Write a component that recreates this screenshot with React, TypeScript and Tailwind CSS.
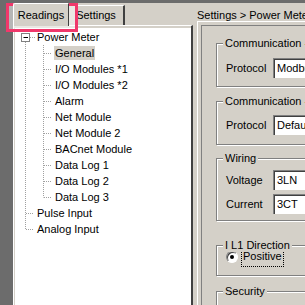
import React from "react";

// Tree rows: [label, level]
const TREE: Array<[string, number]> = [
  ["Power Meter", 0],
  ["General", 1],
  ["I/O Modules *1", 1],
  ["I/O Modules *2", 1],
  ["Alarm", 1],
  ["Net Module", 1],
  ["Net Module 2", 1],
  ["BACnet Module", 1],
  ["Data Log 1", 1],
  ["Data Log 2", 1],
  ["Data Log 3", 1],
  ["Pulse Input", 0],
  ["Analog Input", 0],
];

const ROW = 16;

function TreeLines() {
  // connectors drawn in row-local coordinates (origin = top of first row)
  const mid = (i: number) => i * ROW + 8.5;
  const dash = { stroke: "#a0a0a0", strokeWidth: 1, strokeDasharray: "1 1" };
  return (
    <svg className="absolute left-0 top-0" width="176" height="220">
      {/* root level */}
      <line x1={10.5} y1={13} x2={10.5} y2={mid(12)} {...dash} />
      <line x1={15} y1={mid(0)} x2={20} y2={mid(0)} {...dash} />
      <line x1={11} y1={mid(11)} x2={19} y2={mid(11)} {...dash} />
      <line x1={11} y1={mid(12)} x2={19} y2={mid(12)} {...dash} />
      {/* children */}
      <line x1={28.5} y1={16} x2={28.5} y2={mid(10)} {...dash} />
      {TREE.map(([, lvl], i) =>
        lvl === 1 ? <line key={i} x1={29} y1={mid(i)} x2={37} y2={mid(i)} {...dash} /> : null
      )}
      {/* expand box */}
      <rect x={6.5} y={4.5} width={8} height={8} fill="white" stroke="#808080" />
      <line x1={8.5} y1={8.5} x2={13} y2={8.5} stroke="black" />
    </svg>
  );
}

function GroupBox({ title, className, children }: { title: string; className?: string; children?: React.ReactNode }) {
  return (
    <div
      className={
        "relative w-[200px] shrink-0 border border-[#808080] shadow-[inset_1px_1px_0_#ffffff,1px_1px_0_#ffffff] " +
        (className ?? "")
      }
    >
      <span className="absolute -top-[8px] left-[6px] bg-[#d4d0c8] px-[2px] leading-[14px] whitespace-nowrap">{title}</span>
      {children}
    </div>
  );
}

function Field({ label, value }: { label: string; value: string }) {
  return (
    <div className="flex items-center h-[20px]">
      <span className="w-[47px] shrink-0">{label}</span>
      <div className="h-[20px] w-[90px] shrink-0 bg-white border-t border-l border-[#808080] shadow-[inset_1px_1px_0_#404040] pl-[3px] flex items-center">
        {value}
      </div>
    </div>
  );
}

export default function App() {
  return (
    <div
      className="relative w-[305px] h-[305px] overflow-hidden bg-[#d4d0c8] flex text-[11px] text-black"
      style={{ fontFamily: '"Liberation Sans", Arial, sans-serif' }}
    >
      {/* dark window edge */}
      <div className="w-[13px] bg-[#6c6c6c] shrink-0" />

      {/* left pane: tabs + tree */}
      <div className="w-[180px] shrink-0 flex flex-col border-t-[3px] border-t-[#6c6c6c]">
        <div className="h-[22px] flex items-end">
          <div className="relative z-10 -mb-[1px] h-[23px] w-[56px] bg-[#d4d0c8] border-t border-l border-white border-r border-r-[#404040] rounded-tl-[2px] flex items-center justify-center">
            Readings
          </div>
          <div className="h-[20px] w-[56px] border-t border-white border-r-2 border-r-[#404040] flex items-center justify-center">
            Settings
          </div>
        </div>
        <div className="flex-1 border-l border-t border-white border-r-2 border-r-[#404040] pt-[2px] pl-[1px]">
          <div className="relative h-full bg-white pt-[1px]">
            <div className="relative flex flex-col">
              <TreeLines />
              {TREE.map(([label, lvl], i) => (
                <div key={i} className={"relative h-[16px] flex items-center " + (lvl === 0 ? "pl-[21px]" : "pl-[39px]")}>
                  <span className={"px-[1px] leading-[14px] " + (label === "General" ? "bg-[#d4d0c8]" : "")}>{label}</span>
                </div>
              ))}
            </div>
          </div>
        </div>
      </div>

      {/* right pane */}
      <div className="w-[112px] shrink-0 flex flex-col pl-[4px] border-t-[3px] border-t-[#6c6c6c]">
        <div className="h-[20px] pt-[6px] leading-[12px] whitespace-nowrap">Settings &gt; Power Meter</div>
        <div className="flex-1 border-t border-l border-white pl-[3px] pt-[3px]">
          <div className="h-full border-t border-l border-[#808080] pl-[14px] pt-[17px] flex flex-col">
            <GroupBox title="Communication -" className="h-[44px] pl-[9px] pt-[14px]">
              <Field label="Protocol" value="Modbus" />
            </GroupBox>
            <GroupBox title="Communication -" className="mt-[14px] h-[44px] pl-[9px] pt-[13px]">
              <Field label="Protocol" value="Default" />
            </GroupBox>
            <GroupBox title="Wiring" className="mt-[13px] h-[63px] pl-[9px] pt-[11px] flex flex-col gap-[4px]">
              <Field label="Voltage" value="3LN" />
              <Field label="Current" value="3CT" />
            </GroupBox>
            <GroupBox title="I L1 Direction" className="mt-[24px] h-[31px] pl-[9px]">
              <div className="h-[21px] flex items-center gap-[3px]">
                <span className="w-[12px] h-[12px] shrink-0 rounded-full bg-white border border-t-[#808080] border-l-[#808080] border-b-white border-r-white shadow-[inset_1px_1px_0_#404040] flex items-center justify-center">
                  <span className="w-[4px] h-[4px] rounded-full bg-black" />
                </span>
                <span className="h-[21px] border border-dotted border-black px-[1px] flex items-center">Positive</span>
              </div>
            </GroupBox>
            <GroupBox title="Security" className="mt-[15px] h-[40px]" />
          </div>
        </div>
      </div>

      {/* annotation highlight */}
      <div className="absolute left-[6px] top-[3px] w-[72px] h-[29px] border-[3px] border-[#f0386b] bg-white/50" />
    </div>
  );
}
